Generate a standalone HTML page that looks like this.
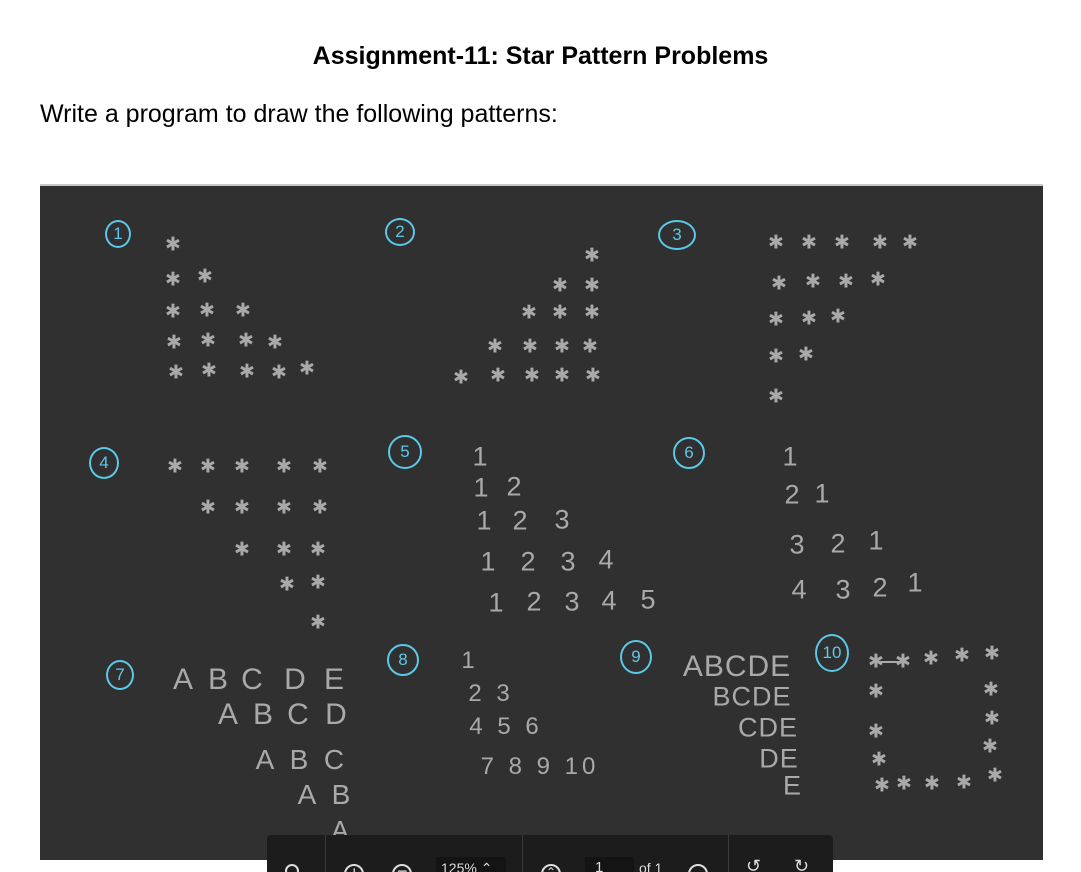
<!DOCTYPE html>
<html><head><meta charset="utf-8"><style>
html,body{margin:0;padding:0;background:#fff;width:1081px;height:872px;overflow:hidden;position:relative;font-family:"Liberation Sans",sans-serif}
h1{position:absolute;top:42px;left:0;width:1081px;text-align:center;font-size:25px;font-weight:bold;margin:0;color:#000}
.sub{position:absolute;top:100px;left:40px;font-size:25px;color:#000}
.board{position:absolute;left:40px;top:184px;width:1003px;height:676px;background:#303030;border-top:2px solid #c8c8c8;box-sizing:border-box}
.a{position:absolute;transform:translate(-50%,-50%);color:#a9a9a9;line-height:1;white-space:nowrap}
.s{font-family:"DejaVu Sans",sans-serif;font-size:19px;font-weight:bold}
.t{font-family:"Liberation Sans",sans-serif;font-size:27px;letter-spacing:0}
.c{position:absolute;transform:translate(-50%,-50%);border:2.5px solid #5cc8e8;border-radius:50%;color:#5cc8e8;font-size:17px;text-align:center;font-family:"Liberation Sans",sans-serif}
.tb{position:absolute;left:267px;top:835px;width:566px;height:37px;background:#1c1c1c;border-radius:4px 4px 0 0}
.sep{position:absolute;top:835px;width:1px;height:37px;background:#3a3a3a}
.ic{position:absolute;color:#ddd;font-size:15px;line-height:1}
.circ{position:absolute;width:20px;height:20px;border:2px solid #ddd;border-radius:50%;box-sizing:border-box}
</style></head><body>
<h1>Assignment-11: Star Pattern Problems</h1>
<div class="sub">Write a program to draw the following patterns:</div>
<div class="board"></div>

<div class="c" style="left:118px;top:234px;width:22px;height:24px;line-height:24px">1</div>
<div class="c" style="left:400px;top:232px;width:26px;height:24px;line-height:24px">2</div>
<div class="c" style="left:677px;top:235px;width:34px;height:26px;line-height:26px">3</div>
<div class="c" style="left:104px;top:463px;width:26px;height:28px;line-height:28px">4</div>
<div class="c" style="left:405px;top:452px;width:30px;height:30px;line-height:30px">5</div>
<div class="c" style="left:689px;top:453px;width:28px;height:28px;line-height:28px">6</div>
<div class="c" style="left:120px;top:675px;width:24px;height:26px;line-height:26px">7</div>
<div class="c" style="left:403px;top:660px;width:28px;height:28px;line-height:28px">8</div>
<div class="c" style="left:636px;top:657px;width:28px;height:30px;line-height:30px">9</div>
<div class="c" style="left:832px;top:653px;width:30px;height:34px;line-height:34px">10</div>

<!-- pattern 1 -->
<span class="a s" style="left:173px;top:245px">✱</span>
<span class="a s" style="left:173px;top:280px">✱</span><span class="a s" style="left:205px;top:277px">✱</span>
<span class="a s" style="left:173px;top:312px">✱</span><span class="a s" style="left:207px;top:311px">✱</span><span class="a s" style="left:243px;top:311px">✱</span>
<span class="a s" style="left:174px;top:343px">✱</span><span class="a s" style="left:208px;top:341px">✱</span><span class="a s" style="left:246px;top:341px">✱</span><span class="a s" style="left:275px;top:343px">✱</span>
<span class="a s" style="left:176px;top:373px">✱</span><span class="a s" style="left:209px;top:371px">✱</span><span class="a s" style="left:247px;top:372px">✱</span><span class="a s" style="left:279px;top:373px">✱</span><span class="a s" style="left:307px;top:369px">✱</span>

<!-- pattern 2 -->
<span class="a s" style="left:592px;top:256px">✱</span>
<span class="a s" style="left:560px;top:286px">✱</span><span class="a s" style="left:592px;top:286px">✱</span>
<span class="a s" style="left:529px;top:313px">✱</span><span class="a s" style="left:560px;top:313px">✱</span><span class="a s" style="left:592px;top:313px">✱</span>
<span class="a s" style="left:495px;top:347px">✱</span><span class="a s" style="left:530px;top:347px">✱</span><span class="a s" style="left:562px;top:347px">✱</span><span class="a s" style="left:590px;top:347px">✱</span>
<span class="a s" style="left:461px;top:378px">✱</span><span class="a s" style="left:498px;top:376px">✱</span><span class="a s" style="left:532px;top:376px">✱</span><span class="a s" style="left:562px;top:376px">✱</span><span class="a s" style="left:593px;top:376px">✱</span>

<!-- pattern 3 -->
<span class="a s" style="left:776px;top:243px">✱</span><span class="a s" style="left:809px;top:243px">✱</span><span class="a s" style="left:842px;top:243px">✱</span><span class="a s" style="left:880px;top:243px">✱</span><span class="a s" style="left:910px;top:243px">✱</span>
<span class="a s" style="left:779px;top:284px">✱</span><span class="a s" style="left:813px;top:282px">✱</span><span class="a s" style="left:846px;top:282px">✱</span><span class="a s" style="left:878px;top:280px">✱</span>
<span class="a s" style="left:776px;top:320px">✱</span><span class="a s" style="left:809px;top:319px">✱</span><span class="a s" style="left:838px;top:317px">✱</span>
<span class="a s" style="left:776px;top:357px">✱</span><span class="a s" style="left:806px;top:355px">✱</span>
<span class="a s" style="left:776px;top:397px">✱</span>

<!-- pattern 4 -->
<span class="a s" style="left:175px;top:467px">✱</span><span class="a s" style="left:208px;top:467px">✱</span><span class="a s" style="left:242px;top:467px">✱</span><span class="a s" style="left:284px;top:467px">✱</span><span class="a s" style="left:320px;top:467px">✱</span>
<span class="a s" style="left:208px;top:508px">✱</span><span class="a s" style="left:242px;top:508px">✱</span><span class="a s" style="left:284px;top:508px">✱</span><span class="a s" style="left:320px;top:508px">✱</span>
<span class="a s" style="left:242px;top:550px">✱</span><span class="a s" style="left:284px;top:550px">✱</span><span class="a s" style="left:318px;top:550px">✱</span>
<span class="a s" style="left:287px;top:585px">✱</span><span class="a s" style="left:318px;top:583px">✱</span>
<span class="a s" style="left:318px;top:623px">✱</span>

<!-- pattern 5 -->
<span class="a t" style="left:480px;top:457px">1</span>
<span class="a t" style="left:481px;top:488px">1</span><span class="a t" style="left:514px;top:487px">2</span>
<span class="a t" style="left:484px;top:521px">1</span><span class="a t" style="left:520px;top:521px">2</span><span class="a t" style="left:562px;top:520px">3</span>
<span class="a t" style="left:488px;top:562px">1</span><span class="a t" style="left:528px;top:562px">2</span><span class="a t" style="left:568px;top:562px">3</span><span class="a t" style="left:606px;top:560px">4</span>
<span class="a t" style="left:496px;top:603px">1</span><span class="a t" style="left:534px;top:602px">2</span><span class="a t" style="left:572px;top:602px">3</span><span class="a t" style="left:609px;top:601px">4</span><span class="a t" style="left:648px;top:600px">5</span>

<!-- pattern 6 -->
<span class="a t" style="left:790px;top:457px">1</span>
<span class="a t" style="left:792px;top:495px">2</span><span class="a t" style="left:822px;top:494px">1</span>
<span class="a t" style="left:797px;top:545px">3</span><span class="a t" style="left:838px;top:544px">2</span><span class="a t" style="left:876px;top:541px">1</span>
<span class="a t" style="left:799px;top:590px">4</span><span class="a t" style="left:843px;top:590px">3</span><span class="a t" style="left:880px;top:588px">2</span><span class="a t" style="left:915px;top:583px">1</span>

<!-- pattern 7 -->
<span class="a t" style="left:183px;top:680px;font-size:30px">A</span><span class="a t" style="left:218px;top:680px;font-size:30px">B</span><span class="a t" style="left:252px;top:680px;font-size:30px">C</span><span class="a t" style="left:295px;top:680px;font-size:30px">D</span><span class="a t" style="left:334px;top:680px;font-size:30px">E</span>
<span class="a t" style="left:228px;top:715px;font-size:30px">A</span><span class="a t" style="left:263px;top:715px;font-size:30px">B</span><span class="a t" style="left:298px;top:715px;font-size:30px">C</span><span class="a t" style="left:336px;top:715px;font-size:30px">D</span>
<span class="a t" style="left:265px;top:760px;font-size:28px">A</span><span class="a t" style="left:299px;top:760px;font-size:28px">B</span><span class="a t" style="left:334px;top:760px;font-size:28px">C</span>
<span class="a t" style="left:307px;top:795px;font-size:28px">A</span><span class="a t" style="left:341px;top:795px;font-size:28px">B</span>
<span class="a t" style="left:340px;top:830px;font-size:26px">A</span>

<!-- pattern 8 -->
<span class="a t" style="left:468px;top:661px;font-size:24px">1</span>
<span class="a t" style="left:491px;top:694px;font-size:24px;letter-spacing:4px">2 3</span>
<span class="a t" style="left:506px;top:727px;font-size:24px;letter-spacing:4px">4 5 6</span>
<span class="a t" style="left:540px;top:767px;font-size:24px;letter-spacing:4px">7 8 9 10</span>

<!-- pattern 9 -->
<span class="a t" style="left:737px;top:667px;font-size:30px;letter-spacing:1px">ABCDE</span>
<span class="a t" style="left:752px;top:697px;font-size:27px;letter-spacing:1px">BCDE</span>
<span class="a t" style="left:768px;top:728px;font-size:27px;letter-spacing:1px">CDE</span>
<span class="a t" style="left:779px;top:759px;font-size:27px;letter-spacing:1px">DE</span>
<span class="a t" style="left:792px;top:786px;font-size:27px">E</span>

<!-- pattern 10 -->
<span class="a s" style="left:876px;top:662px">✱</span><span class="a s" style="left:903px;top:662px">✱</span><span class="a s" style="left:931px;top:659px">✱</span><span class="a s" style="left:962px;top:656px">✱</span><span class="a s" style="left:992px;top:654px">✱</span>
<div style="position:absolute;left:878px;top:661px;width:28px;height:2px;background:#a9a9a9"></div>
<span class="a s" style="left:876px;top:692px">✱</span><span class="a s" style="left:876px;top:732px">✱</span><span class="a s" style="left:879px;top:760px">✱</span>
<span class="a s" style="left:991px;top:690px">✱</span><span class="a s" style="left:992px;top:719px">✱</span><span class="a s" style="left:990px;top:747px">✱</span>
<span class="a s" style="left:882px;top:786px">✱</span><span class="a s" style="left:904px;top:784px">✱</span><span class="a s" style="left:932px;top:784px">✱</span><span class="a s" style="left:964px;top:783px">✱</span><span class="a s" style="left:995px;top:776px">✱</span>

<!-- toolbar -->
<div class="tb"></div>
<div class="sep" style="left:325px"></div>
<div class="sep" style="left:522px"></div>
<div class="sep" style="left:728px"></div>
<div style="position:absolute;left:436px;top:857px;width:70px;height:15px;background:#141414"></div>
<div style="position:absolute;left:585px;top:857px;width:49px;height:15px;background:#141414"></div>
<div class="circ" style="left:285px;top:864px;width:14px;height:14px"></div>
<div class="circ" style="left:344px;top:864px"></div><span class="ic" style="left:349px;top:864px;font-size:18px">+</span>
<div class="circ" style="left:392px;top:864px"></div><span class="ic" style="left:397px;top:862px;font-size:18px">−</span>
<span class="ic" style="left:441px;top:861px;font-size:14px">125% ⌃</span>
<div class="circ" style="left:541px;top:864px"></div><span class="ic" style="left:546px;top:866px;font-size:12px">⌃</span>
<span class="ic" style="left:595px;top:860px;font-size:15px">1</span>
<span class="ic" style="left:639px;top:861px;font-size:14px">of 1</span>
<div class="circ" style="left:688px;top:864px"></div>
<span class="ic" style="left:746px;top:857px;font-size:18px">↺</span>
<span class="ic" style="left:794px;top:857px;font-size:18px">↻</span>
</body></html>
